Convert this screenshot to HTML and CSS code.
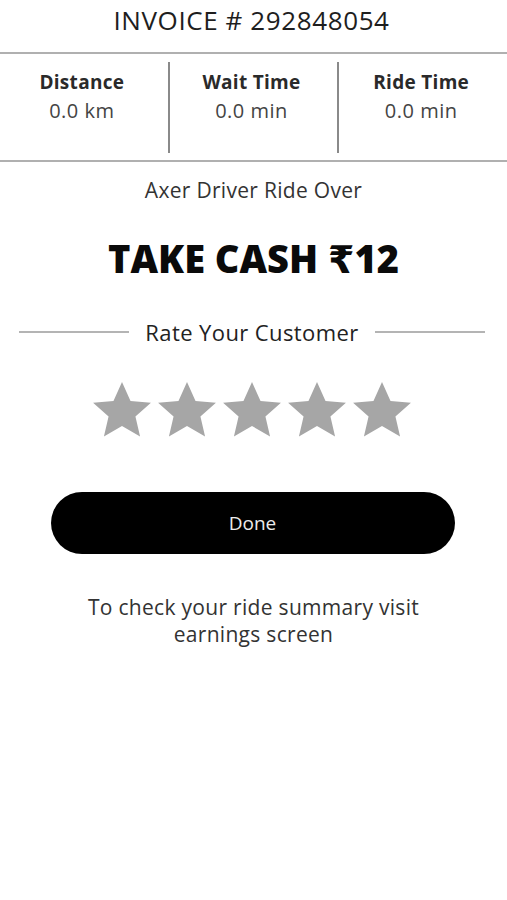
FILE: index.html
```html
<!DOCTYPE html>
<html>
<head>
<meta charset="utf-8">
<link rel="stylesheet" href="styles.css">
</head>
<body>
<div class="screen">
  <div class="title">INVOICE # 292848054</div>
  <div class="stats">
    <div class="stat">
      <div class="stat-label">Distance</div>
      <div class="stat-value">0.0 km</div>
    </div>
    <div class="stat">
      <div class="stat-label">Wait Time</div>
      <div class="stat-value">0.0 min</div>
    </div>
    <div class="stat">
      <div class="stat-label">Ride Time</div>
      <div class="stat-value">0.0 min</div>
    </div>
  </div>
  <div class="ride-over">Axer Driver Ride Over</div>
  <div class="cash">TAKE CASH ₹12</div>
  <div class="rate">
    <span class="rate-line"></span>
    <span class="rate-text">Rate Your Customer</span>
    <span class="rate-line"></span>
  </div>
  <div class="stars">
    <svg class="star" viewBox="0 0 24 24"><path d="M12 1.2l3.3 7.3 7.9.7-6 5.3 1.8 7.8L12 18.2l-7 4.1 1.8-7.8-6-5.3 7.9-.7z"/></svg>
    <svg class="star" viewBox="0 0 24 24"><path d="M12 1.2l3.3 7.3 7.9.7-6 5.3 1.8 7.8L12 18.2l-7 4.1 1.8-7.8-6-5.3 7.9-.7z"/></svg>
    <svg class="star" viewBox="0 0 24 24"><path d="M12 1.2l3.3 7.3 7.9.7-6 5.3 1.8 7.8L12 18.2l-7 4.1 1.8-7.8-6-5.3 7.9-.7z"/></svg>
    <svg class="star" viewBox="0 0 24 24"><path d="M12 1.2l3.3 7.3 7.9.7-6 5.3 1.8 7.8L12 18.2l-7 4.1 1.8-7.8-6-5.3 7.9-.7z"/></svg>
    <svg class="star" viewBox="0 0 24 24"><path d="M12 1.2l3.3 7.3 7.9.7-6 5.3 1.8 7.8L12 18.2l-7 4.1 1.8-7.8-6-5.3 7.9-.7z"/></svg>
  </div>
  <button class="done">Done</button>
  <p class="note">To check your ride summary visit<br>earnings screen</p>
</div>
</body>
</html>
```
FILE: styles.css
```css
* { box-sizing: border-box; }
html, body {
  margin: 0;
  padding: 0;
  background: #fff;
}
body {
  font-family: "Open Sans", "DejaVu Sans", sans-serif;
  color: #222;
}
.screen {
  width: 507px;
  height: 900px;
  display: flex;
  flex-direction: column;
  align-items: center;
}
.title {
  height: 52px;
  padding-top: 4px;
  font-size: 26px;
  line-height: 32px;
  color: #1e1e1e;
  letter-spacing: 0.6px;
  margin-right: 4px;
}
.stats {
  width: 100%;
  display: flex;
  border-top: 2px solid #b0b0b0;
  border-bottom: 2px solid #b0b0b0;
  padding: 8px 0 7px;
}
.stat {
  flex: 1;
  height: 91px;
  display: flex;
  flex-direction: column;
  align-items: center;
  padding-top: 6px;
  padding-right: 4px;
}
.stat + .stat {
  border-left: 2px solid #8a8a8a;
}
.stat-label {
  font-weight: 700;
  font-size: 19px;
  line-height: 28px;
  color: #2a2a2a;
  letter-spacing: 0.3px;
}
.stat-value {
  font-size: 20px;
  line-height: 30px;
  color: #444;
  letter-spacing: 0.5px;
}
.ride-over {
  margin-top: 15px;
  font-size: 21px;
  line-height: 26px;
  color: #333;
  letter-spacing: 0.3px;
}
.cash {
  margin-top: 33px;
  font-size: 38px;
  line-height: 44px;
  font-weight: 800;
  color: #0a0a0a;
}
.rate {
  margin-top: 38px;
  width: 100%;
  padding: 0 22px 0 19px;
  display: flex;
  align-items: center;
  gap: 16px;
}
.rate-line {
  flex: 1;
  height: 2px;
  background: #b4b4b4;
}
.rate-text {
  font-size: 22px;
  line-height: 28px;
  color: #222;
  letter-spacing: 0.4px;
}
.stars {
  margin-top: 33px;
  display: flex;
  gap: 3px;
  margin-left: -4px;
}
.star {
  width: 62px;
  height: 62px;
  fill: #a6a6a6;
}
.done {
  margin-top: 51px;
  width: 404px;
  height: 62px;
  border: none;
  border-radius: 31px;
  background: #000;
  color: #ececec;
  font-family: "Open Sans", "DejaVu Sans", sans-serif;
  font-size: 19px;
  margin-left: -2px;
}
.note {
  margin: 40px 0 0;
  text-align: center;
  font-size: 21px;
  line-height: 27px;
  color: #333;
  letter-spacing: 0.3px;
}
```
